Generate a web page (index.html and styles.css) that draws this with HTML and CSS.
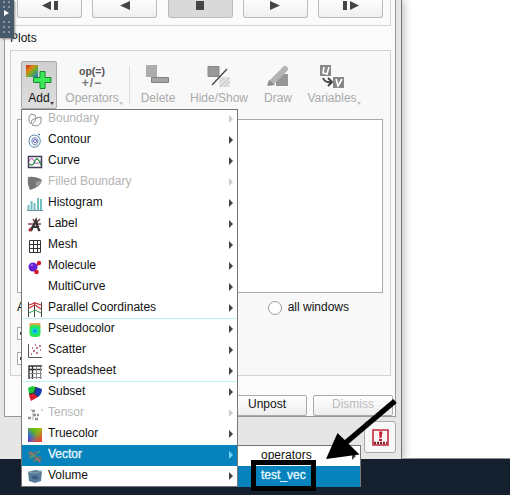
FILE: index.html
```
<!DOCTYPE html>
<html lang="en">
<head>
<meta charset="utf-8">
<title>Plots</title>
<link rel="stylesheet" href="styles.css">
</head>
<body>
<div class="desktop">
  <div class="window">
    <main class="panel">
      <section class="playback">
        <div class="key"><svg width="16" height="10"><path d="M9 0v9L0 4.500zM12 0h4v9h-4z"/></svg></div>
        <div class="key"><svg width="10" height="10"><path d="M10 0v9L0 4.500z"/></svg></div>
        <div class="key pressed"><svg width="10" height="10"><path d="M1 0h8v9H1z"/></svg></div>
        <div class="key"><svg width="10" height="10"><path d="M0 0v9l10-4.500z"/></svg></div>
        <div class="key"><svg width="16" height="10"><path d="M0 0h4v9H0zM7 0v9l9-4.500z"/></svg></div>
      </section>
      <h1 class="heading">Plots</h1>
      <section class="plots">
        <div class="toolbar">
          <div class="tool add">
            <svg width="26" height="26"><defs><linearGradient id="tl" x2="1" y2="1"><stop stop-color="#d52020"/><stop offset=".35" stop-color="#d98a10"/><stop offset=".6" stop-color="#62b030"/><stop offset="1" stop-color="#2870e0"/></linearGradient><linearGradient id="tc" x1="0" y1="1" x2="1" y2="0"><stop stop-color="#5a28e0"/><stop offset=".3" stop-color="#3a70c0"/><stop offset=".6" stop-color="#60b820"/><stop offset="1" stop-color="#a8c810"/></linearGradient><linearGradient id="tr" x2="1" y2="1"><stop offset=".4" stop-color="#f07020" stop-opacity="0"/><stop offset=".9" stop-color="#f04030"/></linearGradient></defs><path fill="url(#tl)" d="M0 0h12v12H0z"/><path d="M14 6.500h5v6h6v5h-6v6h-5v-6H7.500v-5H14z" fill="#3ce95b" stroke="#168629"/></svg>
            <span>Add</span><i class="drop"></i>
          </div>
          <div class="tool operators"><div class="opicon"><b>op(=)</b><b class="pm">+/−</b></div><span>Operators</span><i class="drop"></i></div>
          <div class="rule"></div>
          <div class="tool delete"><svg width="26" height="26"><path d="M1 0h11v12H1z" fill="#adadad"/><path d="M6.500 12.500h17v5h-17z" fill="#a5a5a5" stroke="#808080"/></svg><span>Delete</span></div>
          <div class="tool hide"><svg width="26" height="26"><path d="M2 1.500h11v10H2z" fill="#999" stroke="#888"/><path d="M13 12h11v10H13z" fill="#e2e2e2"/><path d="M14 17l4-4M14 22l9-9M18 22l6-6" stroke="#c4c4c4"/><path d="M6 20L21 4" stroke="#444" stroke-width="1.200"/></svg><span>Hide/Show</span></div>
          <div class="tool draw"><svg width="26" height="26"><path d="M11 9h12v12H11z" fill="#969696"/><path d="M7 17L20 4" stroke="#b4b4b4" stroke-width="6" stroke-linecap="round"/><path d="M2 21l2-6 6 5z" fill="#8a8a8a"/></svg><span>Draw</span></div>
          <div class="tool variables"><svg width="26" height="26"><path d="M1 0h11v11H1zM14 12h11v11H14z" fill="#888"/><path d="M5 2L4 8l4 1 2-7M17 14l2 7 4-7" fill="none" stroke="#fff" stroke-width="1.600"/><path d="M4 13q2 5 8 4m-3-4l4 4-4 4" fill="none" stroke="#444" stroke-width="2"/></svg><span>Variables</span><i class="drop"></i></div>
        </div>
        <div class="list"></div>
        <div class="apply"><span>A</span><label><i class="radio"></i>all windows</label></div>
        <div class="check"></div><div class="check"></div>
      </section>
      <footer class="actions"><button>Unpost</button><button disabled>Dismiss</button></footer>
    </main>
    <div class="status"><div class="alert"><svg width="17" height="17"><path d="M1 1h15v15H1z" fill="#f8f5f5" stroke="#c22841" stroke-width="1.600"/><path d="M7 2.500h3.500L9.500 9h-2zM7 10h3v2H7z" fill="#ce1a32"/><path d="M2 14h13" stroke="#82212e" stroke-width="2.500" stroke-dasharray="2 1"/></svg></div></div>
  </div>
  <div class="grip"><svg width="14" height="38"><path d="M4 1v34M9 1v34" stroke="#8694a1" stroke-width="2" stroke-dasharray="2 3"/><path d="M3 8h8v12H3z" fill="#465a6c"/><path d="M4 10v6l5-3z" fill="#fff"/></svg></div>
  <nav class="menu">
    <div class="row off first"><svg viewBox="0 0 16 16"><path d="M2 5l2-3 4 1 1 3-4 2-1 4-2-3zM9 6l5-1v6l-4 3-5-1 3-4z" fill="none" stroke="#777"/></svg><span>Boundary</span></div>
    <div class="row"><svg viewBox="0 0 16 16"><path d="M3 4q4-4 9 0 3 5-1 9-5 3-8-1-2-4 0-8zM5 6q3-3 6 1 0 5-4 5-3-2-2-6" fill="none" stroke="#5586ac"/><circle cx="8" cy="8" r="1.600" fill="none" stroke="#7250c0"/><path d="M11 1l2 1" stroke="#384b75"/></svg><span>Contour</span></div>
    <div class="row"><svg viewBox="0 0 16 16"><path d="M1.500 2.500h13v11h-13z" fill="#fff" stroke="#423e59" stroke-width="1.500"/><path d="M2 7q3-5 5 0t7 0" fill="none" stroke="#b344a8"/><path d="M2 10q4 3 6-3t6 4" fill="none" stroke="#288b44" stroke-width="1.300"/></svg><span>Curve</span></div>
    <div class="row off"><svg viewBox="0 0 16 16"><path d="M1 2q8-1 14 3-1 7-12 10Q0 9 1 2" fill="#555"/><path d="M9 7l6-2q-1 4-6 7z" fill="#888"/></svg><span>Filled Boundary</span></div>
    <div class="row"><svg viewBox="0 0 16 16"><path d="M1.500 15V9M4.500 15V5M7.500 15V7M11 15V2M14 15V3" stroke="#72bec3" stroke-width="2"/><path d="M0 14.500h16" stroke="#76909d"/></svg><span>Histogram</span></div>
    <div class="row"><svg viewBox="0 0 16 16"><path d="M1 7h13M6 2l7 12M2 13L13 2" stroke="#8b4551" stroke-width="1.500"/><path d="M4 14l5-11 3 11M5 10h7" stroke="#343434" stroke-width="2" fill="none"/><circle cx="3" cy="13" r="1.500" fill="#b62435"/></svg><span>Label</span></div>
    <div class="row"><svg viewBox="0 0 16 16"><path d="M2.500 2.500h11v12h-11zM6.500 2v12M10.500 2v12M2 6.500h12M2 10.500h12" fill="none" stroke="#333"/></svg><span>Mesh</span></div>
    <div class="row"><svg viewBox="0 0 16 16"><path d="M7 9l6-6M7 9l2 4" stroke="#b53b57" stroke-width="2"/><circle cx="6" cy="8" r="4.500" fill="#6521d1"/><circle cx="12" cy="4" r="2.200" fill="#d51c2c"/><circle cx="9.500" cy="13" r="2.300" fill="#d51c2c"/><circle cx="5" cy="6" r="1.300" fill="#9863ed"/></svg><span>Molecule</span></div>
    <div class="row"><svg viewBox="0 0 16 16"></svg><span>MultiCurve</span></div>
    <div class="row"><svg viewBox="0 0 16 16"><path d="M1.500 1v15M7.500 1v15M14.500 1v15" stroke="#444"/><path d="M2 4l6-2 6 2M2 7l6-3 6 4" stroke="#d33236" stroke-width="1.300" fill="none"/><path d="M2 12l6-3 6 3" stroke="#3b9454" fill="none"/></svg><span>Parallel Coordinates</span></div>
    <div class="row line"><svg viewBox="0 0 16 16"><path d="M2.500 1h11v5h-11z" fill="#e0a850"/><rect x="2.500" y="3" width="11" height="12" rx="4" fill="#29e953"/><circle cx="8" cy="9" r="3.500" fill="#10d4c8"/><circle cx="8" cy="9" r="1.300" fill="#1d77dd"/></svg><span>Pseudocolor</span></div>
    <div class="row"><svg viewBox="0 0 16 16"><path d="M1.500 1v13.500H15" stroke="#555" fill="none"/><path d="M4 11h1M6 8h2M5 5h1M9 10h2M9 5h2M12 3h2M13 7h1M8 2h1" stroke="#a94767" stroke-width="1.400"/></svg><span>Scatter</span></div>
    <div class="row"><svg viewBox="0 0 16 16"><path d="M2 15V2h13M5.500 2v13M2 5.500h13" stroke="#333" stroke-width="1.400" fill="none"/><path d="M9.500 3v12M13.500 3v12M3 9.500h12M3 13.500h12" stroke="#888" fill="none"/></svg><span>Spreadsheet</span></div>
    <div class="row line"><svg viewBox="0 0 16 16"><path d="M1 3q4-3 8-1L7 8l-5 1z" fill="#19c733"/><path d="M9 2l6 2q0 5-4 8L7 8z" fill="#163daf"/><path d="M2 9l5-1 4 4-7 4q-2-4-2-7z" fill="#d91e32"/><path d="M9 2L7 8l4 4M2 9l5-1" stroke="#263034" fill="none"/></svg><span>Subset</span></div>
    <div class="row off"><svg viewBox="0 0 16 16"><path d="M1 12h3M5 5h3M6 9h3M8 13h3M10 9h2" stroke="#777" stroke-width="2.600"/><path d="M14 4h2M3 4h2M6 7v7" stroke="#999"/></svg><span>Tensor</span></div>
    <div class="row"><svg viewBox="0 0 16 16"><path d="M1 1h14v14H1z" fill="url(#tc)"/><path d="M1 1h14v14H1z" fill="url(#tr)"/></svg><span>Truecolor</span></div>
    <div class="row on"><svg viewBox="0 0 16 16"><path d="M2 4l12 9M2 9l8-5M6 13l8-4" stroke="#567779" stroke-width="3"/><path d="M2 4l5 3M9 10l4 4" stroke="#9b746b" stroke-width="2"/><path d="M3 10l5-3M10 5l3-2" stroke="#5ba275" stroke-width="1.500"/></svg><span>Vector</span></div>
    <div class="row last"><svg viewBox="0 0 16 16"><path d="M1 4l7-2 7 1-1 10-6 2-6-2z" fill="#587d9a"/><path d="M1 4l7 1 7-2" stroke="#88a6b3" fill="none"/><path d="M4 9q4-4 8 1-4 4-8-1" fill="#405d87"/></svg><span>Volume</span></div>
  </nav>
  <nav class="submenu"><div class="row">operators</div><div class="row on last">test_vec</div></nav>
  <svg class="annotation" width="510" height="495"><path d="M395 401L343 445" stroke="#000" stroke-width="5.500"/><path d="M326 459l11.500-26 22 21.500z"/><path d="M253.500 462.500h60v26h-60z" fill="none" stroke="#000" stroke-width="5"/></svg>
</div>
</body>
</html>
```
FILE: styles.css
```
* { box-sizing: border-box; }
body { margin: 0; font: 12px/20px "Liberation Sans", Arial, sans-serif; color: #111; }
.desktop { position: relative; width: 510px; height: 495px; overflow: hidden; background: linear-gradient(#fff 0 458px, #14202d 459px); }
.window { width: 402px; height: 459px; background: #e6e6e6; border-right: 1px solid #777; box-shadow: 2px 0 8px #bbb; clip-path: inset(0 -12px 0 0); }
.panel { width: 392px; height: 417px; margin-left: 4px; background: #fbfbfb; border: solid #999; border-width: 0 1px 1px; padding: 0 4px 0 5px; }
.playback { height: 26px; border-right: 1px solid #d2d2d2; border-bottom: 1px solid #d2d2d2; display: flex; gap: 10.300px; padding-left: 7px; }
.key { width: 65px; height: 18px; border: 1px solid #bbb; border-top: 0; border-radius: 0 0 3px 3px; background: linear-gradient(#fdfdfd, #f0f0f0); display: flex; justify-content: center; padding-top: 1px; fill: #444; }
.pressed { background: #d9d9d9; }
.heading { height: 24px; margin: 0; font-size: 12px; line-height: 24px; font-weight: 400; }
.plots { height: 326px; border: 1px solid #d2d2d2; background: #f8f8f8; padding: 10px 6px 0; }
.toolbar { display: flex; height: 58px; padding-left: 4px; }
.tool { display: flex; flex-direction: column; align-items: center; height: 48px; padding-top: 4px; color: #aaa; line-height: 16px; position: relative; flex: none; }
.tool span { margin-top: -1px; }
.add { width: 36px; color: #111; background: linear-gradient(#cfcfcf, #dedede); border: 1px solid #aaa; border-radius: 2px; padding-top: 3px; }
.drop { position: absolute; bottom: 4px; right: -4px; border: solid transparent; border-width: 3px 2px 0; border-top-color: #c4c4c4; }
.add .drop { border-top-color: #444; right: 2px; bottom: 3px; }
.operators { width: 54px; margin-left: 8px; }
.opicon { height: 26px; display: flex; flex-direction: column; align-items: center; font-size: 10.500px; line-height: 12px; color: #555; }
.pm { font-size: 12px; color: #777; letter-spacing: 1px; }
.rule { width: 1px; height: 38px; margin: 5px 10px 0 10px; background: #ddd; }
.delete { width: 36px; }
.hide { width: 58px; margin-left: 14px; }
.draw { width: 28px; margin-left: 16px; }
.variables { width: 50px; margin-left: 15px; }
.list { width: 366px; height: 174px; border: 1px solid #aaa; background: #fff; }
.apply { height: 31px; display: flex; align-items: center; justify-content: space-between; padding: 0 35px 4px 0; }
.apply label { display: flex; align-items: center; gap: 6px; }
.radio { width: 14px; height: 14px; border: 1px solid #999; border-radius: 50%; background: #fff; position: relative; top: 1px; }
.check { width: 13px; height: 13px; border: 1px solid #aaa; background: linear-gradient(#444, #444) 2px 4px / 2px 3px no-repeat #fff; margin: 3px 0 12px; }
.actions { display: flex; justify-content: flex-end; gap: 6px; padding-top: 19px; margin-right: -2px; }
button { width: 80px; height: 21px; padding: 0 0 3px; border: 1px solid #aaa; border-radius: 2px; background: linear-gradient(#fff, #ededed); font: inherit; line-height: 16px; color: #111; }
button:disabled { color: #bbb; }
.status { display: flex; justify-content: flex-end; padding: 4px 5px 0 0; }
.alert { width: 32px; height: 32px; border: 1px solid #aaa; border-radius: 3px; background: #f7f7f7; display: flex; align-items: center; justify-content: center; }
.grip { position: absolute; left: 0; top: 0; width: 14px; height: 38px; background: #465a6c; box-shadow: 1px 1px 2px #888; }
.menu, .submenu { position: absolute; background: #fff; border: 1px solid #777; }
.menu { left: 21px; top: 109px; width: 217px; height: 378px; }
.row { height: 21px; display: flex; align-items: center; padding-left: 5px; position: relative; line-height: 18px; }
.row svg { width: 16px; height: 16px; margin-right: 5px; flex: none; }
.row span { padding-bottom: 3px; line-height: 15px; }
.first, .last { height: 20px; }
.row.first { padding-bottom: 1px; }
.menu .last span { padding-bottom: 1px; }
.row::after { content: ""; position: absolute; right: 4px; top: 6px; border: solid transparent; border-width: 4px 0 4px 4px; border-left-color: #444; }
.row.first::after { top: 5px; }
.off { color: #b4b4b4; }
.off svg { opacity: .8; }
.row.off::after { border-left-color: #ccc; }
.line { box-shadow: 0 -1px #bdf3f5; }
.on { background: #0683bd; color: #e8faff; }
.menu .on::after { border-left-color: #70d8f4; }
.submenu { left: 237px; top: 445px; width: 124px; height: 42px; border-color: #777 #777 #0683bd; }
.submenu .row { height: 20px; padding-left: 23px; padding-bottom: 3px; }
.submenu .on::after { display: none; }
.submenu .on, .menu .on span { -webkit-text-stroke: .3px #e8faff; }
.annotation { position: absolute; left: 0; top: 0; }
```
